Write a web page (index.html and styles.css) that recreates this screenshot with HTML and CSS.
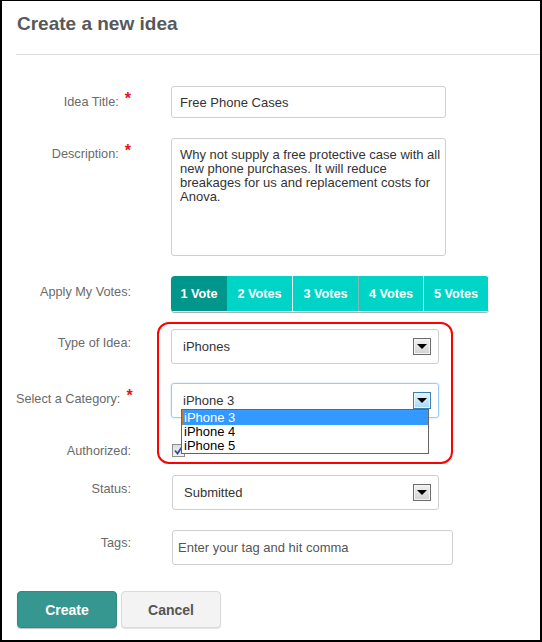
FILE: index.html
```html
<!DOCTYPE html>
<html>
<head>
<meta charset="utf-8">
<link rel="stylesheet" href="styles.css">
</head>
<body>
<div class="frame">
  <h1 class="title">Create a new idea</h1>
  <div class="rule"></div>

  <div class="row row-title">
    <div class="label">Idea Title:<span class="req">*</span></div>
    <div class="field"><div class="input w-title">Free Phone Cases</div></div>
  </div>

  <div class="row row-desc">
    <div class="label">Description:<span class="req">*</span></div>
    <div class="field"><div class="textarea">Why not supply a free protective case with all<br>new phone purchases. It will reduce<br>breakages for us and replacement costs for<br>Anova.</div></div>
  </div>

  <div class="row row-votes">
    <div class="label label-votes">Apply My Votes:</div>
    <div class="field">
      <div class="votes">
        <span class="vote active v1">1 Vote</span><span class="vote v2">2 Votes</span><span class="vote v3 sep-light">3 Votes</span><span class="vote v4 sep-dark">4 Votes</span><span class="vote v5 sep-light">5 Votes</span>
      </div>
    </div>
  </div>

  <div class="row row-type">
    <div class="label">Type of Idea:</div>
    <div class="field">
      <div class="select">
        <span>iPhones</span>
        <span class="arrow"><svg width="10" height="5" viewBox="0 0 10 5"><path d="M0 0H10L5 5Z" fill="#000"/></svg></span>
      </div>
    </div>
  </div>

  <div class="row row-cat">
    <div class="label">Select a Category:<span class="req">*</span></div>
    <div class="field field-pop">
      <div class="select focused">
        <span>iPhone 3</span>
        <span class="arrow arrow-blue"><svg width="10" height="5" viewBox="0 0 10 5"><path d="M0 0H10L5 5Z" fill="#000"/></svg></span>
      </div>
      <div class="options">
        <div class="opt sel">iPhone 3</div>
        <div class="opt">iPhone 4</div>
        <div class="opt">iPhone 5</div>
      </div>
    </div>
  </div>

  <div class="row row-auth">
    <div class="label label-auth">Authorized:</div>
    <div class="field">
      <span class="checkbox"><svg width="11" height="11" viewBox="0 0 11 11"><path d="M2 5.5L4.5 8.5L9 2" stroke="#2f4f9a" stroke-width="1.8" fill="none"/></svg></span>
    </div>
  </div>

  <div class="row row-status">
    <div class="label">Status:</div>
    <div class="field">
      <div class="select select-status">
        <span>Submitted</span>
        <span class="arrow"><svg width="10" height="5" viewBox="0 0 10 5"><path d="M0 0H10L5 5Z" fill="#000"/></svg></span>
      </div>
    </div>
  </div>

  <div class="row row-tags">
    <div class="label label-tags">Tags:</div>
    <div class="field"><div class="input w-tags placeholder">Enter your tag and hit comma</div></div>
  </div>

  <div class="actions">
    <button class="btn btn-create">Create</button>
    <button class="btn btn-cancel">Cancel</button>
  </div>

  <div class="highlight"></div>
</div>
</body>
</html>
```

FILE: styles.css
```css
* { box-sizing: border-box; }
html, body { margin: 0; padding: 0; background: #fff; }
body { font-family: "Liberation Sans", Arial, sans-serif; }

.frame {
  position: relative;
  width: 542px;
  height: 642px;
  border: 2px solid #000;
  border-top-width: 1px;
  padding: 11px 0 0 14px;
}

.title {
  margin: 0;
  padding-left: 1px;
  font-size: 19px;
  line-height: 23px;
  font-weight: bold;
  color: #58585a;
}

.rule {
  height: 1px;
  background: #dcdcdc;
  margin-top: 19px;
}

.row {
  display: grid;
  grid-template-columns: 115px 1fr;
  column-gap: 40px;
}
.row-title { margin-top: 31px; }
.row-desc { margin-top: 20px; }
.row-votes { margin-top: 20px; }
.row-type { margin-top: 17px; }
.row-cat { margin-top: 19px; }
.row-auth { margin-top: 26px; }
.row-status { margin-top: 16px; }
.row-tags { margin-top: 20px; }

.label {
  text-align: right;
  font-size: 12.7px;
  line-height: 15px;
  color: #6a6a6a;
  padding-top: 7px;
  white-space: nowrap;
}
.label-votes { padding-top: 9px; }
.label-auth { padding-top: 0; }
.label-tags { padding-top: 6px; }

.req {
  color: #e3161d;
  font-size: 16px;
  font-weight: bold;
  margin-left: 6px;
  position: relative;
  top: -2px;
}

.field { position: relative; }

.input {
  height: 32px;
  border: 1px solid #cfcfcf;
  border-radius: 3px;
  font-size: 13px;
  color: #333;
  padding: 0 0 0 8px;
  display: flex;
  align-items: center;
}
.w-title { width: 275px; }
.w-tags { width: 281px; height: 35px; margin-left: 1px; padding-left: 5px; }
.placeholder { color: #555; }

.textarea {
  width: 275px;
  height: 118px;
  border: 1px solid #cfcfcf;
  border-radius: 3px;
  font-size: 13px;
  line-height: 14px;
  color: #333;
  padding: 9px 8px;
  white-space: nowrap;
  overflow: hidden;
}

.votes {
  display: flex;
  width: 318px;
  height: 36px;
  border-radius: 4px;
  overflow: hidden;
  box-shadow: 0 1px 1px rgba(0,0,0,0.35);
}
.vote {
  display: flex;
  align-items: center;
  justify-content: center;
  background: #00d4c6;
  color: #fff;
  font-size: 12.7px;
  font-weight: bold;
  height: 35px;
  width: 65px;
}
.vote.active { background: #00968b; width: 56px; }
.v2 { width: 65px; }
.v3 { width: 66px; }
.sep-light { border-left: 1px solid #e6fbf9; }
.sep-dark { border-left: 1px solid #7fb8b4; }

.select {
  width: 268px;
  height: 35px;
  border: 1px solid #cfcfcf;
  border-radius: 3px;
  display: flex;
  align-items: center;
  justify-content: space-between;
  padding: 0 7px 0 11px;
  font-size: 13px;
  color: #333;
}
.select.focused {
  border-color: #9ccbf0;
  box-shadow: 0 0 2px rgba(102,175,233,0.5);
}
.select-status { width: 267px; margin-left: 1px; }

.arrow {
  width: 18px;
  height: 17px;
  border: 1px solid #6c6c6c;
  box-shadow: inset 0 0 0 1px #f4f4f4;
  background: linear-gradient(#f2f2f2, #d2d2d2);
  display: flex;
  align-items: center;
  justify-content: center;
}
.arrow svg { display: block; margin-top: -1px; }
.arrow-blue {
  border-color: #3c7fb1;
  box-shadow: inset 0 0 0 1px #eaf6fd;
  background: linear-gradient(#e5f4fc, #a7d9f5);
}

.options {
  position: absolute;
  left: 10px;
  top: 26px;
  width: 248px;
  border: 1px solid #646464;
  background: #fff;
  z-index: 2;
  font-size: 13px;
  color: #000;
}
.opt {
  height: 14px;
  line-height: 14px;
  padding-left: 2px;
}
.opt.sel {
  height: 15px;
  line-height: 14px;
  background: #3399ff;
  color: #fff;
  border: 1px dotted #c7813a;
  padding-left: 1px;
}

.checkbox {
  display: flex;
  align-items: center;
  justify-content: center;
  width: 13px;
  height: 13px;
  margin-left: 1px;
  border: 1px solid #8f8f8f;
  background: linear-gradient(#dedede, #f5f5f5);
}
.checkbox svg { display: block; }

.actions {
  display: flex;
  gap: 4px;
  margin-top: 26px;
  padding-left: 1px;
}
.btn {
  font-family: "Liberation Sans", Arial, sans-serif;
  font-size: 14px;
  font-weight: bold;
  height: 37px;
  width: 100px;
  border-radius: 4px;
  padding: 0;
  cursor: pointer;
}
.btn-create {
  background: #35978f;
  color: #fff;
  border: 1px solid #2f8a83;
  box-shadow: 0 1px 1px rgba(0,0,0,0.25);
}
.btn-cancel {
  background: #f3f3f3;
  color: #555;
  border: 1px solid #dadada;
  box-shadow: 0 1px 1px rgba(0,0,0,0.12);
}

.highlight {
  position: absolute;
  left: 155px;
  top: 321px;
  width: 296px;
  height: 142px;
  border: 2px solid #f00;
  border-radius: 12px;
  pointer-events: none;
}
```
